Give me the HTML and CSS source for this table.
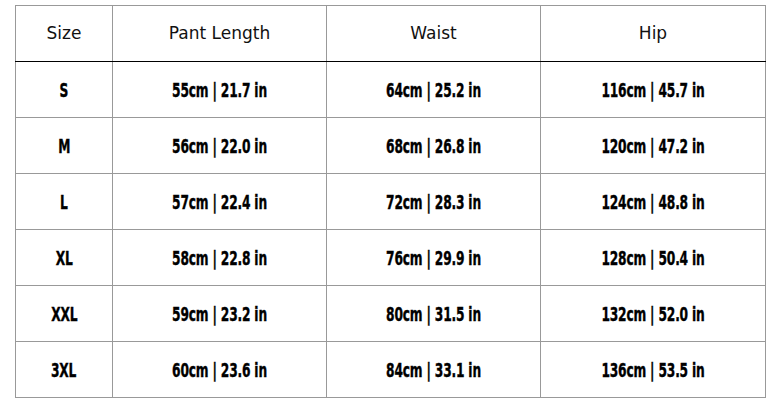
FILE: index.html
```html
<!DOCTYPE html>
<html>
<head>
<meta charset="utf-8">
<link rel="stylesheet" href="styles.css">
</head>
<body>
<table class="size-table">
  <colgroup>
    <col class="c-size"><col class="c-len"><col class="c-waist"><col class="c-hip">
  </colgroup>
  <thead>
    <tr><th>Size</th><th>Pant Length</th><th>Waist</th><th>Hip</th></tr>
  </thead>
  <tbody>
    <tr><td><span class="v">S</span></td><td><span class="v">55cm | 21.7 in</span></td><td><span class="v">64cm | 25.2 in</span></td><td><span class="v">116cm | 45.7 in</span></td></tr>
    <tr><td><span class="v">M</span></td><td><span class="v">56cm | 22.0 in</span></td><td><span class="v">68cm | 26.8 in</span></td><td><span class="v">120cm | 47.2 in</span></td></tr>
    <tr><td><span class="v">L</span></td><td><span class="v">57cm | 22.4 in</span></td><td><span class="v">72cm | 28.3 in</span></td><td><span class="v">124cm | 48.8 in</span></td></tr>
    <tr><td><span class="v">XL</span></td><td><span class="v">58cm | 22.8 in</span></td><td><span class="v">76cm | 29.9 in</span></td><td><span class="v">128cm | 50.4 in</span></td></tr>
    <tr><td><span class="v">XXL</span></td><td><span class="v">59cm | 23.2 in</span></td><td><span class="v">80cm | 31.5 in</span></td><td><span class="v">132cm | 52.0 in</span></td></tr>
    <tr><td><span class="v">3XL</span></td><td><span class="v">60cm | 23.6 in</span></td><td><span class="v">84cm | 33.1 in</span></td><td><span class="v">136cm | 53.5 in</span></td></tr>
  </tbody>
</table>
</body>
</html>
```
FILE: styles.css
```css
html, body {
  margin: 0;
  padding: 0;
  background: #fff;
}
body {
  padding: 5px 0 0 15px;
}
.size-table {
  border-collapse: collapse;
  table-layout: fixed;
  width: 750px;
}
.c-size { width: 97px; }
.c-len { width: 214px; }
.c-waist { width: 214px; }
.c-hip { width: 225px; }
.size-table th,
.size-table td {
  border: 1px solid #999;
  text-align: center;
  vertical-align: middle;
  padding: 0;
  height: 55px;
  color: #000;
}
.size-table th {
  font-family: "DejaVu Sans", sans-serif;
  font-weight: normal;
  font-size: 17px;
  color: #111;
  border-bottom: 1px solid #000;
  height: 54px;
  padding-bottom: 1px;
}
.size-table td {
  font-family: "DejaVu Sans", sans-serif;
  font-weight: bold;
  font-size: 19px;
  letter-spacing: -0.3px;
}
.v {
  display: inline-block;
  transform: scaleX(0.645);
  white-space: nowrap;
  -webkit-text-stroke: 0.4px #000;
}
```
